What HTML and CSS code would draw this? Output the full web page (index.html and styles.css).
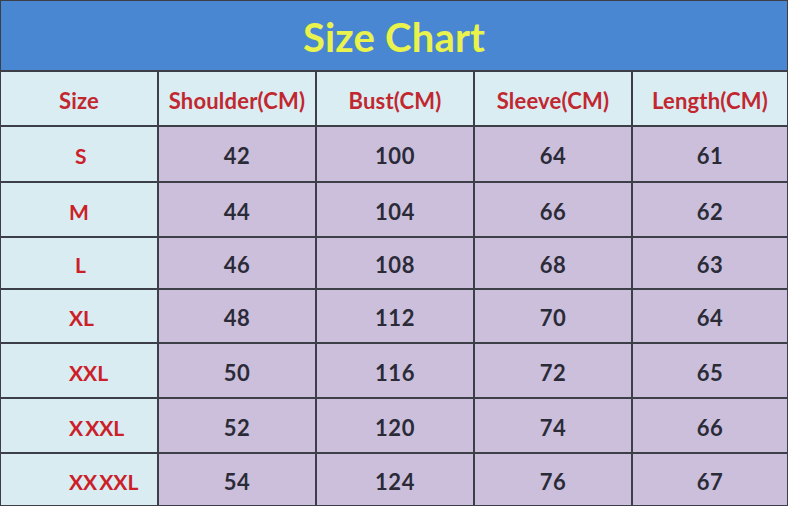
FILE: index.html
```html
<!DOCTYPE html>
<html>
<head>
<meta charset="utf-8">
<link rel="stylesheet" href="styles.css">
</head>
<body>
<div class="chart">
  <div class="title">Size Chart</div>
  <div class="head">Size</div>
  <div class="head">Shoulder(CM)</div>
  <div class="head">Bust(CM)</div>
  <div class="head">Sleeve(CM)</div>
  <div class="head">Length(CM)</div>

  <div class="size narrow">S</div><div class="val">42</div><div class="val">100</div><div class="val">64</div><div class="val">61</div>
  <div class="size">M</div><div class="val">44</div><div class="val">104</div><div class="val">66</div><div class="val">62</div>
  <div class="size narrow">L</div><div class="val">46</div><div class="val">108</div><div class="val">68</div><div class="val">63</div>
  <div class="size">XL</div><div class="val">48</div><div class="val">112</div><div class="val">70</div><div class="val">64</div>
  <div class="size">XXL</div><div class="val">50</div><div class="val">116</div><div class="val">72</div><div class="val">65</div>
  <div class="size">X XXL</div><div class="val">52</div><div class="val">120</div><div class="val">74</div><div class="val">66</div>
  <div class="size">XX XXL</div><div class="val">54</div><div class="val">124</div><div class="val">76</div><div class="val">67</div>
</div>
</body>
</html>
```
FILE: styles.css
```css
html, body {
  margin: 0;
  padding: 0;
  background: #ffffff;
}
body {
  font-family: Lato, "Open Sans", sans-serif;
}
.chart {
  width: 788px;
  box-sizing: border-box;
  padding: 1px;
  background: #3d3f48;
  display: grid;
  grid-template-columns: 156px 156px 156px 156px 154px;
  grid-template-rows: 69px 53px 54px 53px 50px 52px 53px 53px 51px;
  gap: 2px;
}
.title {
  grid-column: 1 / -1;
  background: #4a87d2;
  color: #e9f34c;
  font-weight: 700;
  font-size: 40px;
  display: flex;
  align-items: center;
  justify-content: center;
  padding-top: 3px;
  box-sizing: border-box;
  letter-spacing: 0.2px;
}
.head, .val, .size {
  display: flex;
  align-items: center;
  font-weight: 700;
  box-sizing: border-box;
  padding-top: 3px;
}
.head, .val {
  justify-content: center;
}
.head {
  background: #d9edf3;
  color: #c2272f;
  font-size: 22px;
  letter-spacing: 0.2px;
}
.size {
  justify-content: flex-start;
  padding-left: 68px;
  background: #d9ecf2;
  color: #cc2028;
  font-size: 21px;
  word-spacing: -3px;
}
.size.narrow {
  padding-left: 74px;
}
.val {
  background: #cbbfdc;
  color: #2b2b38;
  font-size: 22px;
  letter-spacing: 0.5px;
}
```
